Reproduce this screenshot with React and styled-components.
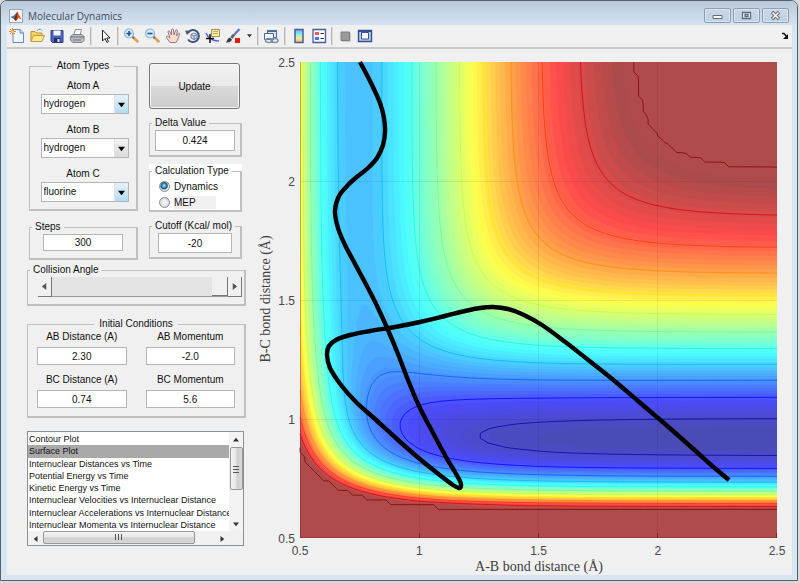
import React from 'react';
import styled, { createGlobalStyle, css } from 'styled-components';

const GlobalStyle = createGlobalStyle`
  * { box-sizing: border-box; }
  body {
    margin: 0;
    background: #d9d9d9;
    font-family: 'Liberation Sans', Arial, sans-serif;
    font-size: 10px;
    color: #111;
  }
  button, input, select { font: inherit; color: inherit; }
`;

/* ---------- window frame ---------- */

const Window = styled.main`
  margin-right: 2px;
  border: 1px solid #55606b;
  border-radius: 7px 7px 0 0;
  background: #d7e4f2;
  padding: 0 5px 5px 6px;
`;

const TitleBar = styled.header`
  display: flex;
  align-items: center;
  gap: 5px;
  height: 24px;
  margin: 0 -5px 0 -6px;
  padding: 5px 8px 0 8px;
  border-radius: 6px 6px 0 0;
  background: linear-gradient(#b9c9d9, #d5e2f0);
`;

const Title = styled.h1`
  flex: 1;
  margin: 0;
  font-family: 'Open Sans', 'Noto Sans', sans-serif;
  font-size: 10px;
  line-height: 16px;
  font-weight: 400;
  color: #3f4b58;
`;

const WindowButtons = styled.div`
  display: flex;
  gap: 2px;
`;

const WindowButton = styled.button`
  display: grid;
  place-items: center;
  width: 27px;
  height: 15px;
  padding: 0;
  border: 1px solid #8e9eb2;
  border-radius: 2px;
  background: linear-gradient(#c9d6e4, #c2d1e1);
  box-shadow: inset 0 0 0 1px #d9e4ef;
`;

const Toolbar = styled.nav`
  display: flex;
  align-items: center;
  height: 24px;
  padding-bottom: 1px;
  background: #f0f0f0;
  border-bottom: 2px solid #cacaca;
`;

const ToolGroup = styled.div`
  display: flex;
  gap: ${(p) => (p.$loose ? '1px' : '0')};
`;

const ToolButton = styled.button`
  display: grid;
  place-items: center;
  width: ${(p) => (p.$narrow ? '12px' : '20px')};
  height: 20px;
  padding: 0;
  border: 0;
  background: none;
`;

const Divider = styled.span`
  width: 2px;
  height: 18px;
  margin: 0 ${(p) => (p.$wide ? '3px' : '2px')};
  border-left: 1px solid #b4b4b4;
  border-right: 1px solid #dcdcdc;
`;

const DockButton = styled(ToolButton)`
  margin: 0 -3px 0 auto;
`;

const Body = styled.div`
  display: flex;
  align-items: flex-start;
  gap: 10px;
  padding-left: 20px;
  background: #f0f0f0;
`;

/* ---------- controls ---------- */

const Controls = styled.section`
  flex: none;
  width: 219px;
  padding: 10px 0 28px;
`;

const Columns = styled.div`
  display: flex;
  gap: 11px;
  padding: 0 3px 0 2px;
`;

const Column = styled.div`
  display: flex;
  flex-direction: column;
  width: ${(p) => p.$width};
  gap: ${(p) => p.$gap};
  padding-top: ${(p) => p.$top || '0'};
`;

const Panel = styled.fieldset`
  min-width: 0;
  margin: 0;
  padding: ${(p) => p.$pad || '0'};
  border: solid #bfbfbf;
  border-width: 1px 2px 2px 1px;
`;

const PanelTitle = styled.legend`
  margin: ${(p) => (p.$center ? '0 auto' : '0 0 0 2px')};
  padding: 0 ${(p) => (p.$center ? '5px' : '3px')};
  line-height: 14px;
`;

const WhitePanel = styled.div`
  background: #fff;
`;

const Field = styled.label`
  display: flex;
  flex-direction: column;
  align-items: center;
  gap: ${(p) => p.$gap || '0'};
  line-height: ${(p) => p.$line || '14px'};
`;

const Stack = styled.div`
  display: flex;
  flex-direction: column;
  gap: 9px;
`;

const TextInput = styled.input`
  display: block;
  width: ${(p) => p.$width || '80px'};
  height: ${(p) => p.$height || '18px'};
  margin: 0 auto;
  padding: 0;
  border: 1px solid #b4b4ba;
  background: #fff;
  text-align: center;
`;

const SelectBox = styled.span`
  display: grid;
  width: 88px;
  height: 20px;
  margin-left: 3px;
  border: 1px solid #b4b4ba;
  background: #fff;
`;

const NativeSelect = styled.select`
  grid-area: 1 / 1;
  appearance: none;
  width: 100%;
  padding: 0 16px 0 2px;
  border: 0;
  background: transparent;
`;

const SelectArrow = styled.span`
  grid-area: 1 / 1;
  justify-self: end;
  display: grid;
  place-items: center;
  width: 14px;
  pointer-events: none;
  border-left: 1px solid #dde3e8;
  background: ${(p) =>
    p.$active ? 'linear-gradient(#e4f2fb, #b3dbf3)' : 'linear-gradient(#f2f2f2, #dcdcdc)'};
`;

const UpdateButton = styled.button`
  height: 46px;
  margin: 0 2px 0 0;
  padding: 0;
  border: 1px solid #777;
  border-radius: 3px;
  background: linear-gradient(#f2f2f2 0%, #e9e9e9 49%, #dadada 51%, #cccccc 100%);
  box-shadow: inset 0 0 0 1px #f6f6f6;
`;

const RadioRow = styled.label`
  display: flex;
  align-items: center;
  gap: 4px;
  height: 16px;
  padding-left: 9px;
`;

const Radio = styled.input`
  appearance: none;
  width: 11px;
  height: 11px;
  margin: 0;
  border: 1px solid #8a8f94;
  border-radius: 50%;
  background: radial-gradient(circle, #f4f4f4 25%, #cfd2d5 75%);
  &:checked {
    background: radial-gradient(circle at 45% 40%, #7fd0f2 0 12%, #14527c 42%, #e3e8ec 60%);
  }
`;

const RadioText = styled.span`
  flex: ${(p) => (p.$muted ? '0 0 42px' : 'none')};
  line-height: 13px;
  background: ${(p) => (p.$muted ? '#f0f0f0' : 'transparent')};
`;

const SliderRow = styled.div`
  display: flex;
  height: 20px;
  margin: 0 2px 0 10px;
`;

const raised = css`
  border: 0;
  border-right: 1px solid #777;
  border-bottom: 1px solid #777;
  border-radius: 0;
  background: #f0f0f0;
`;

const SliderButton = styled.button`
  ${raised}
  display: grid;
  place-items: center;
  width: 14px;
  padding: 0;
`;

const Range = styled.input`
  appearance: none;
  flex: 1;
  min-width: 0;
  height: 20px;
  margin: 0;
  background: #e4e4e4;
  border-bottom: 1px solid #999;
  &::-webkit-slider-thumb {
    appearance: none;
    width: 16px;
    height: 19px;
    ${raised}
  }
`;

const Conditions = styled.div`
  display: grid;
  grid-template-columns: 1fr 1fr;
  gap: 9px 19px;
`;

const Spacer = styled.div`
  height: ${(p) => p.$size};
`;

/* ---------- list box ---------- */

const ListFrame = styled.div`
  display: grid;
  grid-template-columns: minmax(0, 1fr) 14px;
  width: 217px;
  border: 1px solid #8b919b;
  background: #fff;
`;

const List = styled.ul`
  display: grid;
  grid-auto-rows: 1fr;
  height: 99px;
  margin: 0;
  padding: 1px 0 0;
  list-style: none;
  overflow: hidden;
  font-size: 9px;
`;

const Item = styled.li`
  padding-left: 1px;
  line-height: 12px;
  white-space: nowrap;
  background: ${(p) => (p['aria-selected'] ? '#a9a9a9' : 'transparent')};
`;

const VerticalBar = styled.div`
  display: flex;
  flex-direction: column;
  align-items: center;
  background: #f3f3f3;
`;

const HorizontalBar = styled.div`
  display: flex;
  height: 14px;
  background: #f1f1f1;
`;

const BarButton = styled.button`
  display: grid;
  place-items: center;
  width: 15px;
  height: 15px;
  padding: 0;
  border: 0;
  background: none;
`;

const Thumb = styled.span`
  display: grid;
  place-items: center;
  width: ${(p) => (p.$across ? '152px' : '13px')};
  height: ${(p) => (p.$across ? '13px' : '43px')};
  border: 1px solid #979797;
  border-radius: 2px;
  background: linear-gradient(${(p) => (p.$across ? '180deg' : '90deg')}, #f5f5f5, #e4e4e4 49%, #cfcfcf 51%, #d8d8d8);
`;

const Rest = styled.span`
  flex: 1;
`;

const Corner = styled.span`
  background: #f0f0f0;
`;

const Chart = styled.svg`
  flex: 1;
  min-width: 0;
  display: block;
`;

const TickText = styled.text`
  font: 12px 'Liberation Sans', Arial, sans-serif;
  fill: #484848;
  text-anchor: ${(p) => p.$anchor};
`;

const AxisText = styled.text`
  font: 14px 'Liberation Serif', 'Times New Roman', serif;
  fill: #404040;
  text-anchor: middle;
`;

/* ---------- potential energy surface (collinear LEPS, kcal/mol) ---------- */

const SATO = 0.18;
const PAIR = {
  HH: { D: 109.45, b: 1.942, r0: 0.7419, s: SATO },
  HF: { D: 141.2, b: 2.2187, r0: 0.917, s: SATO },
};

const terms = ({ D, b, r0, s }, r) => {
  const e = Math.exp(-b * (r - r0));
  return {
    q: ((D / 4) * ((3 + s) * e * e - (2 + 6 * s) * e)) / (1 + s),
    j: ((D / 4) * ((1 + 3 * s) * e * e - (6 + 2 * s) * e)) / (1 + s),
  };
};

const CUTOFF = -22.8;
const FLOOR = -141.2;
const CONTOUR_STEP = 10.38;

const energy = (rab, rbc) => {
  const a = terms(PAIR.HH, rab);
  const b = terms(PAIR.HF, rbc);
  const c = terms(PAIR.HF, rab + rbc);
  const ex = ((a.j - b.j) ** 2 + (b.j - c.j) ** 2 + (c.j - a.j) ** 2) / 2;
  return Math.min(CUTOFF, a.q + b.q + c.q - Math.sqrt(ex));
};

const CELLS = 100;
const X0 = 300;
const Y0 = 538;
const SPAN = 477;
const px = (i) => X0 + (i * SPAN) / CELLS;
const py = (j) => Y0 - (j * (SPAN - 1)) / CELLS;

const grid = Array.from({ length: CELLS + 1 }, (_, j) =>
  Array.from({ length: CELLS + 1 }, (_, i) => energy(0.5 + i * 0.02, 0.5 + j * 0.02))
);

const jet = (f) => {
  const channel = (c) => Math.max(0, Math.min(1, 1.5 - Math.abs(4 * f - c)));
  return [channel(3), channel(2), channel(1)];
};
const rgb = (c) => `rgb(${c.map((v) => Math.round(v * 255)).join(',')})`;
const tint = (c) => rgb(c.map((v) => 0.295 + 0.705 * v));

const fixed = (n) => n.toFixed(2);

/* Walks the cells; returns the filled area below the level and its outline. */
const trace = (level) => {
  const fill = [];
  const line = [];
  for (let j = 0; j < CELLS; j++) {
    let start = -1;
    for (let i = 0; i <= CELLS; i++) {
      const pts = i < CELLS
        ? [[i, j], [i + 1, j], [i + 1, j + 1], [i, j + 1]].map(([x, y]) => [x, y, grid[y][x]])
        : [];
      const inside = pts.filter((p) => p[2] < level).length;
      if (inside === 4 && start < 0) start = i;
      if (inside !== 4 && start >= 0) {
        fill.push(`M${fixed(px(start))} ${fixed(py(j))}H${fixed(px(i))}V${fixed(py(j + 1))}H${fixed(px(start))}Z`);
        start = -1;
      }
      if (inside === 0 || inside === 4) continue;
      const poly = [];
      const cuts = [];
      pts.forEach((p, k) => {
        const q = pts[(k + 1) % 4];
        if (p[2] < level) poly.push(`${fixed(px(p[0]))} ${fixed(py(p[1]))}`);
        if (p[2] < level !== q[2] < level) {
          const t = (level - p[2]) / (q[2] - p[2]);
          const s = `${fixed(px(p[0] + t * (q[0] - p[0])))} ${fixed(py(p[1] + t * (q[1] - p[1])))}`;
          poly.push(s);
          cuts.push(s);
        }
      });
      fill.push(`M${poly.join('L')}Z`);
      for (let k = 0; k + 1 < cuts.length; k += 2) line.push(`M${cuts[k]}L${cuts[k + 1]}`);
    }
  }
  return { fill: fill.join(''), line: line.join('') };
};

const COLORS = 64;
const bands = Array.from({ length: COLORS - 1 }, (_, n) => {
  const k = COLORS - 1 - n;
  return {
    color: tint(jet((k + 0.5) / COLORS)),
    d: trace(FLOOR + ((CUTOFF - FLOOR) * k) / COLORS).fill,
  };
});

const contours = Array.from({ length: 12 }, (_, k) => {
  const level = k === 0 ? CUTOFF - 0.01 : CUTOFF - CONTOUR_STEP * k;
  return { color: rgb(jet((level - FLOOR) / (CUTOFF - FLOOR))), d: trace(level).line };
});

const TRAJECTORY = [
  [360, 62], [371, 83], [380, 103], [384, 118], [385, 132], [383, 145], [377, 158], [368, 168],
  [358, 176], [348, 185], [339, 196], [335, 211], [338, 228], [345, 245], [353, 260], [361, 275],
  [370, 292], [378, 308], [388, 330], [398, 354], [408, 380], [419, 406], [432, 431], [446, 457],
  [455, 472], [460, 481], [461, 486], [459, 488], [453, 485], [441, 476], [421, 460], [398, 440],
  [375, 419], [356, 402], [341, 385], [330, 368], [327, 355], [329, 346], [336, 340], [350, 335],
  [370, 331], [395, 327], [420, 322], [445, 316], [465, 311], [480, 308], [493, 307], [508, 309],
  [524, 315], [542, 325], [564, 341], [587, 359], [611, 378], [638, 401], [665, 424], [690, 446],
  [710, 464], [729, 480],
];

const smooth = (p) => {
  let d = `M${p[0]}`;
  for (let i = 0; i < p.length - 1; i++) {
    const [a, b, c, e] = [p[i - 1] || p[i], p[i], p[i + 1], p[i + 2] || p[i + 1]];
    d += `C${b[0] + (c[0] - a[0]) / 6} ${b[1] + (c[1] - a[1]) / 6} ${c[0] - (e[0] - b[0]) / 6} ${c[1] - (e[1] - b[1]) / 6} ${c}`;
  }
  return d;
};

const TICKS = [0.5, 1, 1.5, 2, 2.5];
const tx = (v) => X0 + ((v - 0.5) * SPAN) / 2;
const ty = (v) => Y0 - ((v - 0.5) * (SPAN - 1)) / 2;

function EnergyChart() {
  return (
    <Chart viewBox="256 49 536 526" role="img" aria-label="Potential energy surface with trajectory">
      <rect x={X0} y={Y0 - SPAN + 1} width={SPAN} height={SPAN - 1} fill="#af4b4b" />
      {bands.map((b, i) => <path key={i} d={b.d} fill={b.color} />)}
      {contours.map((c, i) => <path key={i} d={c.d} stroke={c.color} strokeOpacity="0.75" fill="none" />)}
      <g stroke="#000" strokeOpacity="0.07">
        {TICKS.slice(1, 4).map((t) => (
          <path key={t} d={`M${Math.floor(tx(t))}.5 62V538M300 ${Math.floor(ty(t))}.5H777`} />
        ))}
      </g>
      <path d="M300.5 62V537.5H777" fill="none" stroke="#7c2020" strokeOpacity="0.4" />
      <g stroke="#541414" strokeOpacity="0.6">
        {TICKS.slice(1).map((t) => <path key={t} d={`M${Math.ceil(tx(t)) - 1}.5 538v-5`} />)}
      </g>
      <path d={smooth(TRAJECTORY)} fill="none" stroke="#000" strokeWidth="4.400" strokeLinejoin="round" />
      {TICKS.map((t) => (
        <React.Fragment key={t}>
          <TickText x={tx(t)} y="555" $anchor="middle">{t}</TickText>
          <TickText x="295" y={ty(t) + 5} $anchor="end">{t}</TickText>
        </React.Fragment>
      ))}
      <AxisText x="539" y="571">A-B bond distance (Å)</AxisText>
      <AxisText transform="translate(270 299) rotate(-90)">B-C bond distance (Å)</AxisText>
    </Chart>
  );
}

/* ---------- icons ---------- */

const Icon = ({ children, size = 16 }) => (
  <svg width={size} height={size} viewBox={`0 0 ${size} ${size}`} fill="none" aria-hidden="true">{children}</svg>
);

const Arrow = ({ dir, size = 7, color = '#333' }) => (
  <svg width={size} height={size} viewBox="0 0 8 8" aria-hidden="true">
    <path fill={color} d={{ up: 'M0 6L4 1L8 6Z', down: 'M0 2L4 7L8 2Z', left: 'M6 0L1 4L6 8Z', right: 'M2 0L7 4L2 8Z' }[dir]} />
  </svg>
);

const Magnifier = ({ plus }) => (
  <Icon>
    <path d="M10 9l4.500 4.500" stroke="#e0a050" strokeWidth="2.600" strokeLinecap="round" />
    <path d="M9 8.500l2 2" stroke="#777" strokeWidth="2" />
    <circle cx="6" cy="5.500" r="4.500" fill="#cfeaf8" stroke="#8fb3cf" strokeWidth="1.200" />
    <path d={plus ? 'M3.500 5.500h5M6 3v5' : 'M3.500 5.500h5'} stroke="#2a4a9a" strokeWidth="1.600" />
  </Icon>
);

const icons = {
  matlab: (
    <Icon size={14}>
      <path d="M.5.5h13v13H.5z" fill="#f4f4f4" stroke="#9aa5b0" />
      <path d="M1.500 8L5 6.500L8 3L7 9L5 10Z" fill="#3b7ab8" />
      <path d="M5 10L8.300 2.500L10 6L12.500 10.500L9.500 9L7 12Z" fill="#d9541e" />
      <path d="M8.300 2.500L8 8L7 12L5 10Z" fill="#7c2414" />
    </Icon>
  ),
  fresh: (
    <Icon>
      <path d="M4 1.500h7l3.500 3.500v9.500H4z" fill="#eef5fd" stroke="#6a88b8" />
      <path d="M11 1.500v3.500h3.500" fill="#c5d8ef" stroke="#6a88b8" />
      <path d="M3.500 0v7M0 3.500h7M1 1l5 5M6 1L1 6" stroke="#e58a50" />
      <circle cx="3.500" cy="3.500" r="1.500" fill="#f8c060" />
    </Icon>
  ),
  open: (
    <Icon>
      <path d="M2 13.500v-10h4l1.500 1.500H13v3" fill="#f2cf60" stroke="#b8932e" />
      <path d="M8 3c2-2.500 4-2 5-.5" stroke="#6a88b8" />
      <path d="M2 13.500l2.500-6h11l-2.500 6z" fill="#fde892" stroke="#c49d35" />
    </Icon>
  ),
  save: (
    <Icon>
      <path d="M2 2.500h12v12H3.500L2 13z" fill="#4a62b8" stroke="#31458f" />
      <path d="M4.500 2.500h7v5h-7z" fill="#f3f6fc" />
      <path d="M5 10h6.500v4.500H5z" fill="#20306a" />
      <path d="M8.500 11h2v3h-2z" fill="#e8ecf8" />
    </Icon>
  ),
  print: (
    <Icon>
      <path d="M4.500 7L6.500 1.500h6L11 7" fill="#fff" stroke="#8a93a0" />
      <path d="M1.500 8.500L4 6.500h9l2 2v4l-2 2H4l-2.500-2z" fill="#b9bec6" stroke="#7d838b" />
      <path d="M1.500 9H15M4 12h8" stroke="#6c7178" />
      <path d="M11 10.500h2" stroke="#e0b040" />
    </Icon>
  ),
  pointer: (
    <Icon>
      <path d="M5.500 2v11l2.500-2.500 2 4 1.500-1-1.800-3.500H13z" fill="#fff" stroke="#222" strokeLinejoin="round" />
    </Icon>
  ),
  hand: (
    <Icon>
      <path
        d="M5 14.500L1.500 9.500C1 8 2.500 7.500 3.500 9L5 10L3 4c0-1.500 1.500-1.500 2 0l1.500 3L6.500 2c.2-1.500 2-1.500 2 0l.5 5 1.500-4.500c.5-1.200 2-.8 1.800.5L11.500 8l1.500-2.500c.8-1 2-.3 1.600.8L12.500 12 11 14.500z"
        fill="#fde0c4"
        stroke="#8d7a90"
      />
    </Icon>
  ),
  rotate: (
    <Icon>
      <path d="M3 4.500A6 6 0 1 1 3 11.500" stroke="#40557f" strokeWidth="2" />
      <path d="M0 2.500l6 .5-4 4z" fill="#40557f" />
      <path d="M6 6.500l3-1.500 3 1.500v3.500l-3 1.500-3-1.500zM6 6.500l3 1.500 3-1.500M9 8v3.500" stroke="#6a7ea8" fill="#d7e0f0" />
    </Icon>
  ),
  cursor: (
    <Icon>
      <path d="M6.500 1.500h8v7h-8z" fill="#f7eea0" stroke="#9a9358" />
      <path d="M8 3.500h5M8 5.500h5" stroke="#b8ae68" />
      <path d="M1 5c2 5 6 8 13 8" stroke="#5a5ae8" strokeWidth="1.500" />
      <path d="M5 6v9M1 10.500h8" stroke="#111" strokeWidth="1.500" />
    </Icon>
  ),
  brush: (
    <Icon>
      <path d="M14.500 1L8 8" stroke="#6a7cc0" strokeWidth="2.500" />
      <path d="M8.500 7L6.500 10" stroke="#666" strokeWidth="3" />
      <path d="M1 14.500c1-1 1-4 4-5l2 2c-1 3-4 3-6 3z" fill="#3d3d46" />
      <path d="M10 10h5v5h-5z" fill="#ee1515" />
    </Icon>
  ),
  link: (
    <Icon>
      <path d="M4.500 2.500h9v7h-9z" fill="#dce9f8" stroke="#4c67a0" />
      <path d="M4.500 3h9" stroke="#4c67a0" strokeWidth="2" />
      <path d="M1.500 5.500h9v6h-9z" fill="#f4f8fd" stroke="#4c67a0" />
      <ellipse cx="6" cy="12.500" rx="3.500" ry="2" stroke="#7c8ea8" strokeWidth="1.500" />
      <ellipse cx="11.500" cy="12.500" rx="3.500" ry="2" stroke="#7c8ea8" strokeWidth="1.500" />
    </Icon>
  ),
  colorbar: (
    <Icon>
      <defs>
        <linearGradient id="bar" x1="0" y1="0" x2="0" y2="1">
          <stop offset="0" stopColor="#7aa4f0" />
          <stop offset=".4" stopColor="#8ff0e4" />
          <stop offset=".7" stopColor="#f2ec88" />
          <stop offset="1" stopColor="#f4a884" />
        </linearGradient>
      </defs>
      <path d="M4 1.500h8v13H4z" fill="url(#bar)" stroke="#44609c" strokeWidth="1.500" />
    </Icon>
  ),
  legend: (
    <Icon>
      <path d="M2 1.500h12.500v13H2z" fill="#f8fafd" stroke="#44609c" strokeWidth="1.300" />
      <path d="M4 4h4v3H4z" fill="#ee5a5a" />
      <path d="M4 9h4v3H4z" fill="#5a6aee" />
      <path d="M9.500 5.500H13M9.500 10.500H13" stroke="#333" />
    </Icon>
  ),
  hide: (
    <Icon>
      <path d="M4 4h8.500v8.500H4z" fill="#999" stroke="#7d7d7d" />
      <path d="M13.500 5v8.500H5" stroke="#ccc" />
    </Icon>
  ),
  show: (
    <Icon>
      <path d="M1.500 2.500h13v11h-13z" fill="#b8cbe8" stroke="#344f8c" strokeWidth="1.400" />
      <path d="M1.500 3h13" stroke="#344f8c" strokeWidth="2" />
      <path d="M4.500 4.500h7v6.500h-7z" fill="#fff" stroke="#344f8c" />
    </Icon>
  ),
  dock: (
    <Icon size={8}>
      <path d="M1 1.500h2L6 5" stroke="#111" strokeWidth="1.500" />
      <path d="M7 2v5H2z" fill="#111" />
    </Icon>
  ),
};

const caption = {
  Minimize: <path d="M2 5.500h9v3H2z" fill="#fff" stroke="#5d6b7c" />,
  Maximize: <path d="M2.500 2.500h8v6h-8zM5 4.500h3v2H5z" fill="#fff" stroke="#5d6b7c" strokeWidth="1.300" />,
  Close: (
    <>
      <path d="M3 2l7 7M10 2L3 9" stroke="#5d6b7c" strokeWidth="3.500" />
      <path d="M3.500 2.500l6 6M9.500 2.500l-6 6" stroke="#fff" strokeWidth="1.600" />
    </>
  ),
};

const Tool = ({ label, children, ...rest }) => (
  <ToolButton type="button" aria-label={label} {...rest}>{children}</ToolButton>
);

/* ---------- page ---------- */

const ATOMS = [
  { name: 'Atom A', value: 'hydrogen', active: true },
  { name: 'Atom B', value: 'hydrogen', active: false },
  { name: 'Atom C', value: 'fluorine', active: true },
];

const CONDITIONS = [
  ['AB Distance (A)', '2.30'],
  ['AB Momentum', '-2.0'],
  ['BC Distance (A)', '0.74'],
  ['BC Momentum', '5.6'],
];

const PLOTS = [
  'Contour Plot',
  'Surface Plot',
  'Internuclear Distances vs Time',
  'Potential Energy vs Time',
  'Kinetic Energy vs Time',
  'Internuclear Velocities vs Internuclear Distance',
  'Internuclear Accelerations vs Internuclear Distance',
  'Internuclear Momenta vs Internuclear Distance',
];

export default function App() {
  return (
    <>
      <GlobalStyle />
      <Window>
        <TitleBar>
          {icons.matlab}
          <Title>Molecular Dynamics</Title>
          <WindowButtons>
            {Object.entries(caption).map(([name, shape]) => (
              <WindowButton key={name} type="button" aria-label={name}>
                <svg width="13" height="11" viewBox="0 0 13 11" fill="none">{shape}</svg>
              </WindowButton>
            ))}
          </WindowButtons>
        </TitleBar>
        <Toolbar aria-label="Figure tools">
          <ToolGroup>
            <Tool label="New">{icons.fresh}</Tool>
            <Tool label="Open">{icons.open}</Tool>
            <Tool label="Save">{icons.save}</Tool>
            <Tool label="Print">{icons.print}</Tool>
          </ToolGroup>
          <Divider $wide />
          <Tool label="Edit plot">{icons.pointer}</Tool>
          <Divider />
          <ToolGroup $loose>
            <Tool label="Zoom in"><Magnifier plus /></Tool>
            <Tool label="Zoom out"><Magnifier /></Tool>
            <Tool label="Pan">{icons.hand}</Tool>
          </ToolGroup>
          <ToolGroup>
            <Tool label="Rotate 3D">{icons.rotate}</Tool>
            <Tool label="Data cursor">{icons.cursor}</Tool>
            <Tool label="Brush">{icons.brush}</Tool>
            <Tool label="Brush colour" $narrow><Arrow dir="down" size={5} /></Tool>
          </ToolGroup>
          <Divider />
          <Tool label="Link plot">{icons.link}</Tool>
          <Divider $wide />
          <Tool label="Insert colorbar">{icons.colorbar}</Tool>
          <Tool label="Insert legend">{icons.legend}</Tool>
          <Divider />
          <Tool label="Hide plot tools">{icons.hide}</Tool>
          <Tool label="Show plot tools">{icons.show}</Tool>
          <DockButton type="button" aria-label="Dock figure">{icons.dock}</DockButton>
        </Toolbar>
        <Body>
          <Controls>
            <Columns>
              <Column $width="109px" $gap="9px">
                <Panel $pad="6px 0 7px">
                  <PanelTitle $center>Atom Types</PanelTitle>
                  <Stack>
                    {ATOMS.map((atom) => (
                      <Field key={atom.name} $gap="1px">
                        {atom.name}
                        <SelectBox>
                          <NativeSelect defaultValue={atom.value}>
                            <option>hydrogen</option>
                            <option>fluorine</option>
                          </NativeSelect>
                          <SelectArrow $active={atom.active}><Arrow dir="down" color="#000" /></SelectArrow>
                        </SelectBox>
                      </Field>
                    ))}
                  </Stack>
                </Panel>
                <Panel $pad="0 0 7px">
                  <PanelTitle>Steps</PanelTitle>
                  <TextInput $height="17px" aria-label="Steps" defaultValue="300" />
                </Panel>
              </Column>
              <Column $width="93px" $gap="7px" $top="4px">
                <UpdateButton type="button">Update</UpdateButton>
                <Panel $pad="0 0 4px">
                  <PanelTitle>Delta Value</PanelTitle>
                  <TextInput $height="21px" aria-label="Delta Value" defaultValue="0.424" />
                </Panel>
                <WhitePanel>
                  <Panel>
                    <PanelTitle>Calculation Type</PanelTitle>
                    <RadioRow>
                      <Radio type="radio" name="calc" defaultChecked />
                      <RadioText>Dynamics</RadioText>
                    </RadioRow>
                    <RadioRow>
                      <Radio type="radio" name="calc" />
                      <RadioText $muted>MEP</RadioText>
                    </RadioRow>
                  </Panel>
                </WhitePanel>
                <Panel $pad="0 0 4px">
                  <PanelTitle>Cutoff (Kcal/ mol)</PanelTitle>
                  <TextInput $width="74px" $height="20px" aria-label="Cutoff (Kcal/ mol)" defaultValue="-20" />
                </Panel>
              </Column>
            </Columns>
            <Spacer $size="3px" />
            <Panel $pad="0 0 7px">
              <PanelTitle>Collision Angle</PanelTitle>
              <SliderRow>
                <SliderButton type="button" aria-label="Decrease angle"><Arrow dir="left" color="#555" /></SliderButton>
                <Range type="range" aria-label="Collision Angle" min="0" max="180" defaultValue="180" />
                <SliderButton type="button" aria-label="Increase angle"><Arrow dir="right" color="#555" /></SliderButton>
              </SliderRow>
            </Panel>
            <Spacer $size="11px" />
            <Panel $pad="0 9px 8px">
              <PanelTitle $center>Initial Conditions</PanelTitle>
              <Conditions>
                {CONDITIONS.map(([name, value]) => (
                  <Field key={name} $gap="4px" $line="12px">
                    {name}
                    <TextInput $width="100%" defaultValue={value} />
                  </Field>
                ))}
              </Conditions>
            </Panel>
            <Spacer $size="13px" />
            <ListFrame>
              <List role="listbox" aria-label="Plot type">
                {PLOTS.map((name, i) => (
                  <Item key={name} role="option" aria-selected={i === 1}>{name}</Item>
                ))}
              </List>
              <VerticalBar>
                <BarButton type="button" aria-label="Scroll up"><Arrow dir="up" size={6} /></BarButton>
                <Thumb>
                  <svg width="7" height="8" viewBox="0 0 7 8"><path d="M0 1.500h6M0 4.500h6M0 7.500h6" stroke="#555" /></svg>
                </Thumb>
                <Rest />
                <BarButton type="button" aria-label="Scroll down"><Arrow dir="down" size={6} /></BarButton>
              </VerticalBar>
              <HorizontalBar>
                <BarButton type="button" aria-label="Scroll left"><Arrow dir="left" size={6} /></BarButton>
                <Thumb $across>
                  <svg width="8" height="7" viewBox="0 0 8 7"><path d="M.5 0v6M3.500 0v6M6.500 0v6" stroke="#555" /></svg>
                </Thumb>
                <Rest />
                <BarButton type="button" aria-label="Scroll right"><Arrow dir="right" size={6} /></BarButton>
              </HorizontalBar>
              <Corner />
            </ListFrame>
          </Controls>
          <EnergyChart />
        </Body>
      </Window>
    </>
  );
}
